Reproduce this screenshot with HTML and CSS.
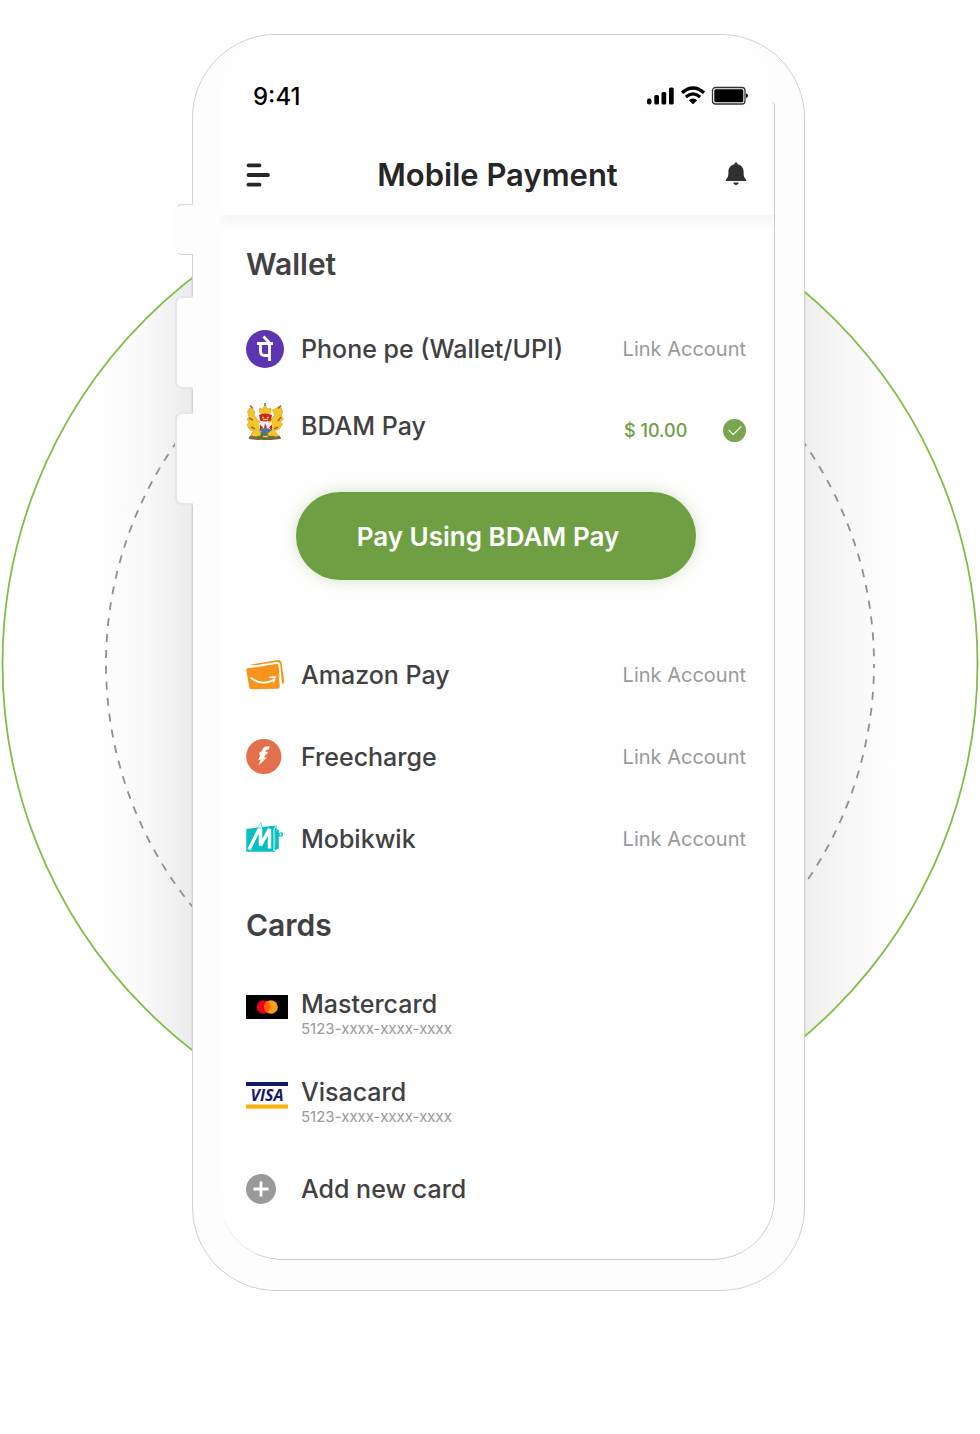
FILE: index.html
```html
<!DOCTYPE html>
<html lang="en">
<head>
<meta charset="utf-8">
<meta name="viewport" content="width=device-width, initial-scale=1">
<title>Mobile Payment</title>
<link rel="stylesheet" href="styles.css">
</head>
<body>
<div class="stage">
  <svg class="halo" viewBox="0 0 980 980" aria-hidden="true">
    <defs>
      <linearGradient id="shadeLeft" x1="0" x2="1" y1="0" y2="0">
        <stop offset="0" stop-color="#fff"/><stop offset=".45" stop-color="#f9f9f9"/><stop offset="1" stop-color="#e9e9e9"/>
      </linearGradient>
      <linearGradient id="shadeRight" x1="0" x2="1" y1="0" y2="0">
        <stop offset="0" stop-color="#ededed"/><stop offset=".5" stop-color="#f8f8f8"/><stop offset="1" stop-color="#fff"/>
      </linearGradient>
      <clipPath id="disc"><circle cx="490" cy="490" r="487"/></clipPath>
    </defs>
    <g clip-path="url(#disc)">
      <rect x="92" y="0" width="110" height="980" fill="url(#shadeLeft)"/>
      <rect x="800" y="0" width="100" height="980" fill="url(#shadeRight)"/>
      <path d="M191.500 0V980M805.500 0V980" stroke="#e2e2e2"/>
    </g>
    <circle cx="490" cy="490" r="487.500" fill="none" stroke="#82bd49" stroke-width="1.800"/>
    <circle cx="490" cy="490" r="384" fill="none" stroke="#8f8f8f" stroke-width="1.800" stroke-dasharray="8 8" stroke-dashoffset="4"/>
  </svg>

  <div class="phone">
    <span class="side-key side-key-mute"></span>
    <span class="side-key side-key-up"></span>
    <span class="side-key side-key-down"></span>

    <div class="screen">
      <div class="status">
        <span class="clock">9:41</span>
        <svg class="status-icons" width="102" height="20" viewBox="0 0 102 20" aria-label="Signal, Wi-Fi and battery">
          <rect x="0" y="12.500" width="4.500" height="6" rx="2"/>
          <rect x="7.300" y="9" width="4.700" height="9.500" rx="1.500"/>
          <rect x="14.500" y="6" width="4.700" height="12.500" rx="1.500"/>
          <rect x="22" y="1.500" width="4.700" height="17" rx="1.500"/>
          <g fill="none" stroke="#000" stroke-width="3.200">
            <path d="M35 6.800Q46 -2.800 57 6.800"/>
            <path d="M38.800 11Q46 4.800 53.200 11"/>
          </g>
          <path d="M41.800 14.300Q46 10.800 50.200 14.300L46.700 17.700Q46 18.300 45.300 17.700Z"/>
          <rect x="65.500" y="1.500" width="32.500" height="16.500" rx="3" fill="none" stroke="#333" stroke-width="1.300"/>
          <rect x="67.300" y="3.300" width="29" height="13" rx="1.500"/>
          <path d="M99 7.500q2 .5 2 2.300t-2 2.300z"/>
        </svg>
      </div>

      <header class="bar">
        <button class="icon-button" type="button" aria-label="Menu">
          <svg width="24" height="26" viewBox="0 0 24 26"><path d="M2.500 3.300h11M2.500 13h19.500M2.500 22.700h11" stroke="#262626" stroke-width="3.800" stroke-linecap="round"/></svg>
        </button>
        <h1 class="title">Mobile Payment</h1>
        <button class="icon-button" type="button" aria-label="Notifications">
          <svg width="22" height="26" viewBox="0 0 22 26" fill="#303030"><path d="M11 .5c1 0 1.600.7 1.600 1.700 3.900.9 6 3.700 6 7.500 0 4.500.5 6 2.300 7.500.8.800.4 1.800-.7 1.800H1.800c-1.100 0-1.500-1-.7-1.800 1.800-1.500 2.300-3 2.300-7.500 0-3.800 2.100-6.600 6-7.500 0-1 .6-1.700 1.600-1.700z"/><path d="M8.200 20.500h5.600c-.3 1.600-1.300 2.400-2.800 2.400s-2.500-.8-2.800-2.400z"/></svg>
        </button>
      </header>

      <main class="content">
        <section class="group">
          <h2 class="heading">Wallet</h2>
          <ul class="list">
            <li class="row">
              <svg class="mark" width="42" height="38" viewBox="0 0 42 38" aria-hidden="true">
                <circle cx="19" cy="19" r="19" fill="#5e35b1"/>
                <path d="M11 13.500h16M14.500 13.500v7.500q0 4.500 4.500 4.500h4.500M23.500 13.500v17.500M23.300 12.500L17.500 6.500" fill="none" stroke="#fff" stroke-width="2.800"/>
              </svg>
              <span class="name">Phone pe (Wallet/UPI)</span>
              <a class="link" href="#phonepe">Link Account</a>
            </li>
            <li class="row row-selected">
              <svg class="mark" width="42" height="46" viewBox="0 0 42 46" aria-hidden="true">
                <path d="M4 33q15-9 30 0l1 3q-16 2-32 0z" fill="#3f8140"/>
                <path d="M3 35q3-2 6 0t6 0 6 0 6 0 7 0" fill="none" stroke="#9b5738" stroke-width="2"/>
                <g fill="#f0c727" stroke="#c39222" stroke-width=".5">
                  <path d="M1.500 9l2-4 3 1 2.500 3-1 3 3 4 3 3 1 6-2 2 2 3-1 3H5l1-3 2-2-4-1-3-5 2-3-2-3 2-2z"/>
                  <path d="M36.500 8l-2-5-4 2-4 2 2 5-3 4-3 3-1 6 2 2-2 3 1 3h9l-1-3-2-2 5-2 3-5-2-2 3-3-2-3z"/>
                  <path d="M13.500 9l0-4 3 1 2.500-4 2.500 4 3.500-1 0 4-2 3h-7.500z"/>
                </g>
                <path d="M4 2.500l3 3M35 2.500l-3 3M3 15l4 2M35 14l-3 4M5 24l4 2M32 24l-4 2M19 0v3" stroke="#c4552b" stroke-width="1.500"/>
                <path d="M13 12q6-3 13 0l-1 5.500q-6 2-11 0z" fill="#c8262c"/>
                <path d="M16 14.500h2M21 14.500h2M17 16.500h5" fill="none" stroke="#f2c931" stroke-width="1.400"/>
                <path d="M13 19.500h13v4q-1 5-6.500 7Q14 29 13 24z" fill="#f0ede7"/>
                <path d="M14 21.500l3 3-3 3zM19 20.500l2 4-3 1zM26 21.500l-3 3 3 3z" fill="#c8262c"/>
                <path d="M13 27q6-4 13 0l-6.500 5z" fill="#5070a2"/>
                <path d="M7 32l4 1M29 33l4-1M17 33.500h5" stroke="#f2c931" stroke-width="1.600"/>
              </svg>
              <span class="name">BDAM Pay</span>
              <span class="balance">
                <label for="bdam">$ 10.00</label>
                <input class="tick" id="bdam" type="checkbox" checked>
              </span>
            </li>
          </ul>

          <button class="pay" type="button">Pay Using BDAM Pay</button>

          <ul class="list">
            <li class="row">
              <svg class="mark" width="42" height="38" viewBox="0 0 42 38" aria-hidden="true">
                <path d="M3.500 8.800L32 4q3-.4 3.500 2.500L38.200 25q.2 2.500-2.200 3.200L30 12z" fill="#f7941e"/>
                <path d="M2 11.200L30.500 7q2.500-.2 2.900 2.200L35.300 30" fill="none" stroke="#fff" stroke-width="1.800"/>
                <path d="M.3 14q-.2-1.500 1.300-1.700L29 8.800q2.300-.2 2.600 2L33.800 30q.2 2.700-2.300 2.800L6 33.200q-2.400 0-2.800-2.200z" fill="#f7941e"/>
                <path d="M5 22q11 8.500 23.500 1.500M24 21.300l5-.4-1.400 4.700" fill="none" stroke="#fff" stroke-width="1.700" stroke-linecap="round"/>
              </svg>
              <span class="name">Amazon Pay</span>
              <a class="link" href="#amazon">Link Account</a>
            </li>
            <li class="row">
              <svg class="mark" width="42" height="38" viewBox="0 0 42 38" aria-hidden="true">
                <circle cx="17.800" cy="18.500" r="17.600" fill="#e2704c"/>
                <path d="M17 10.500Q18.500 7.800 23.800 8.200L22.800 11.600Q19.800 11 19.200 13.800H21.800L21 16.500H19.300L18.300 19.500H20.800L12.500 27.500L14.800 21.800H12.300L14.500 16.500H13L13.800 13.800H15.500Z" fill="#fff"/>
              </svg>
              <span class="name">Freecharge</span>
              <a class="link" href="#freecharge">Link Account</a>
            </li>
            <li class="row">
              <svg class="mark" width="42" height="38" viewBox="0 0 42 38" aria-hidden="true">
                <path d="M.3 9L11 7.500 30.500 5.500 29 31.800H.3z" fill="#08bfc1"/>
                <path d="M30.500 6.500l.5 3h1.800v3.500l3-.8q1.500.3 1.300 2.300-.3 2-1.500 2h-2.800v12l-4 1.800z" fill="#08bfc1"/>
                <path d="M28 31V9.500l2-3.500" fill="none" stroke="#fff" stroke-width=".9"/>
                <circle cx="34.600" cy="14.500" r="1" fill="#fff"/>
                <path d="M3 29.500L14.500 6.500V25.500L23.500 9V28.500" fill="none" stroke="#fff" stroke-width="3.400" stroke-linejoin="bevel"/>
                <path d="M11 8.500L15 2.500L15.800 7z" fill="#fff" stroke="#08bfc1" stroke-width=".6"/>
              </svg>
              <span class="name">Mobikwik</span>
              <a class="link" href="#mobikwik">Link Account</a>
            </li>
          </ul>
        </section>

        <section class="group">
          <h2 class="heading">Cards</h2>
          <ul class="list">
            <li class="row row-card">
              <svg class="mark" width="42" height="38" viewBox="0 0 42 38" aria-hidden="true">
                <rect y="7" width="42" height="24" fill="#000"/>
                <circle cx="17.500" cy="19" r="6.800" fill="#eb001b"/>
                <circle cx="25" cy="19" r="6.800" fill="#f79e1b"/>
                <path d="M21.250 13.300a6.800 6.800 0 0 1 0 11.400a6.800 6.800 0 0 1 0-11.400z" fill="#ff5f00"/>
              </svg>
              <div class="card-text">
                <span class="name">Mastercard</span>
                <span class="number">5123-xxxx-xxxx-xxxx</span>
              </div>
            </li>
            <li class="row row-card">
              <svg class="mark" width="42" height="38" viewBox="0 0 42 38" aria-hidden="true">
                <rect y="6" width="42" height="4" fill="#141a6b"/>
                <rect y="28.500" width="42" height="4.200" fill="#f9b50b"/>
                <text class="visa" x="21" y="25" text-anchor="middle">VISA</text>
              </svg>
              <div class="card-text">
                <span class="name">Visacard</span>
                <span class="number">5123-xxxx-xxxx-xxxx</span>
              </div>
            </li>
            <li>
              <button class="row row-card row-add" type="button">
                <svg class="mark" width="42" height="30" viewBox="0 0 42 30" aria-hidden="true">
                  <circle cx="15" cy="15" r="15" fill="#999"/>
                  <path d="M15 7.500v15M7.500 15h15" stroke="#fff" stroke-width="2.800"/>
                </svg>
                <span class="name">Add new card</span>
              </button>
            </li>
          </ul>
        </section>
      </main>
    </div>
  </div>
</div>
</body>
</html>
```
FILE: styles.css
```css
* {
  box-sizing: border-box;
}

body {
  margin: 0;
  background: #fff;
  color: #414042;
  font-family: Inter, "Liberation Sans", sans-serif;
}

button {
  border: 0;
  padding: 0;
  background: none;
  color: inherit;
  font: inherit;
  cursor: pointer;
}

svg {
  display: block;
}

.stage {
  position: relative;
  min-height: 100vh;
  padding: 34px 0 34px 17px;
}

/* Rings behind the handset */
.halo {
  position: absolute;
  top: 174px;
  left: 0;
  right: 0;
  width: 100%;
  max-width: 980px;
  margin: 0 auto;
}

.phone {
  position: relative;
  max-width: 613px;
  margin: 0 auto;
  padding: 0 29px 30px 27px;
  border: 1px solid #d0d0d0;
  border-radius: 84px;
  background: #fdfdfd;
}

/* Hardware keys on the edge of the handset */
.side-key {
  position: absolute;
  left: -18px;
  width: 18px;
  height: 93px;
  border: 2px solid #e6e6e6;
  border-right: 0;
  border-radius: 7px 0 0 7px;
  background: #fdfdfd;
}

.side-key-mute {
  top: 169px;
  height: 51px;
  border: 1px solid #d4d4d4;
  border-left-color: #fbfbfb;
  border-right: 0;
}

.side-key-up {
  top: 261px;
}

.side-key-down {
  top: 377px;
}

.screen {
  position: relative;
  overflow: hidden;
  border-radius: 56px 56px 62px 62px;
  background: #fefefe;
}

.screen::after {
  content: "";
  position: absolute;
  inset: 67px 0 0;
  border: 1px solid #cdc9cb;
  border-width: 0 1px 1px 0;
  border-radius: 0 4px 62px 62px;
  pointer-events: none;
}

.status {
  display: flex;
  align-items: center;
  justify-content: space-between;
  height: 99px;
  padding: 23px 26px 0 33px;
}

.clock {
  color: #000;
  font-size: 24px;
  font-weight: 500;
}

.bar {
  display: flex;
  align-items: center;
  justify-content: space-between;
  height: 81px;
  padding: 0 28px 0 26px;
  background: #fefefe;
  box-shadow: 0 8px 10px rgba(0, 0, 0, 0.04);
}

.title {
  margin: 0;
  color: #262626;
  font-size: 31px;
  font-weight: 600;
}

.content {
  padding: 4px 29px 27px 26px;
}

.heading {
  margin: 20px 0 19px;
  font-size: 30px;
  font-weight: 600;
  line-height: 50px;
}

.list {
  margin: 0;
  padding: 0;
  list-style: none;
}

.row {
  display: flex;
  align-items: center;
  min-height: 82px;
}

.mark {
  flex: none;
  margin-right: 13px;
}

.name {
  flex: 1;
  font-size: 25px;
  font-weight: 500;
  line-height: 32px;
}

.link {
  color: #999;
  font-size: 20px;
  text-decoration: none;
}

.row-selected {
  min-height: 72px;
}

.balance {
  display: flex;
  align-items: center;
  justify-content: space-between;
  width: 122px;
  padding-top: 8px;
  color: #6d9f43;
  font-size: 18px;
  font-weight: 500;
}

.tick {
  display: grid;
  place-items: center;
  width: 23px;
  height: 23px;
  margin: 0;
  border-radius: 50%;
  background: #79a551;
  appearance: none;
}

.tick:checked::before {
  content: "";
  width: 11px;
  height: 6px;
  margin-bottom: 4px;
  border: solid #fff;
  border-width: 0 0 1px 1px;
  transform: rotate(-45deg);
}

.pay {
  display: block;
  width: 80%;
  height: 88px;
  margin: 30px auto 54px;
  padding-right: 16px;
  border-radius: 44px;
  background: #6f9f43;
  box-shadow: 0 0 14px rgba(111, 159, 67, 0.3);
  color: #fff;
  font-size: 26px;
  font-weight: 600;
}

.row-card {
  align-content: center;
  align-items: flex-start;
  flex-wrap: wrap;
  min-height: 88px;
}

.card-text {
  display: flex;
  flex: 1;
  flex-direction: column;
}

.number {
  color: #999;
  font-size: 15px;
  line-height: 18px;
}

.row-add {
  align-items: center;
  width: 100%;
  text-align: left;
}

.visa {
  fill: #141a6b;
  font: italic 700 16px "Open Sans", sans-serif;
}
```
